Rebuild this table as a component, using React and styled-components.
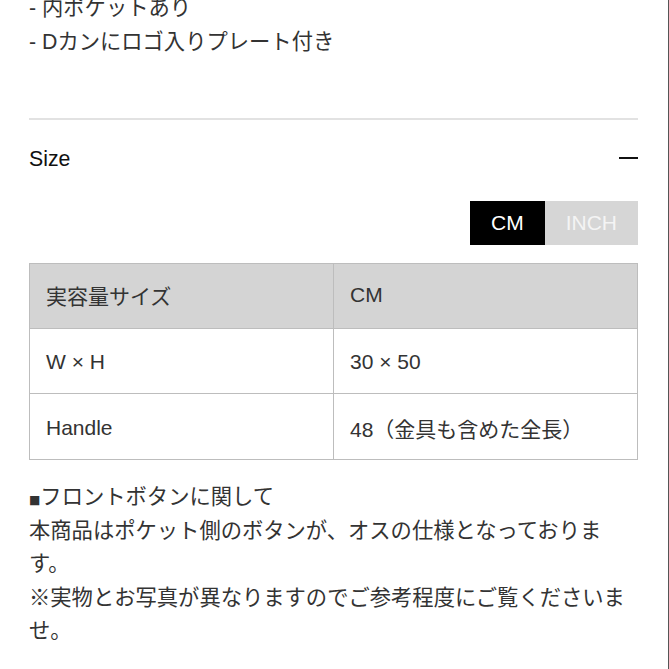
import React from "react";
import styled, { createGlobalStyle } from "styled-components";

const Global = createGlobalStyle`
  html, body { margin: 0; padding: 0; background: #fff; }
  body { font-family: "Liberation Sans", "Noto Sans CJK JP", sans-serif; }
`;

const Page = styled.div`
  width: 669px;
  height: 669px;
  box-sizing: border-box;
  border-right: 1px solid #555;
  overflow: hidden;
  padding: 0 30px 0 29px;
  color: #333;
  font-size: 21.3px;
`;

const Lines = styled.div`
  margin-top: ${(p) => p.$top}px;
  line-height: ${(p) => p.$lh}px;
`;

const Line = styled.div`
  white-space: nowrap;
`;

const Divider = styled.hr`
  margin: 59px 0 0;
  border: 0;
  height: 2px;
  background: #e2e2e2;
`;

const SectionHead = styled.div`
  margin-top: 19px;
  height: 40px;
  display: flex;
  align-items: center;
  justify-content: space-between;
  color: #111;
`;

const Minus = styled.span`
  display: block;
  width: 19px;
  height: 2px;
  background: #111;
  margin-top: -2px;
`;

const ToggleBar = styled.div`
  margin-top: 22px;
  display: flex;
  justify-content: flex-end;
`;

const ToggleButton = styled.div`
  height: 44px;
  padding: 0 21px;
  display: flex;
  align-items: center;
  font-size: 21px;
  background: ${(p) => (p.$active ? "#000" : "#d6d6d6")};
  color: ${(p) => (p.$active ? "#fff" : "#f4f4f4")};
`;

const Table = styled.table`
  margin-top: 18px;
  width: 100%;
  border-collapse: collapse;
  table-layout: fixed;
  border-right: 1px solid #ddd;
`;

const Cell = styled.td`
  height: ${(p) => p.$h}px;
  box-sizing: border-box;
  padding: ${(p) => (p.$head ? "0 16px 2px" : "2px 16px 0")};
  border: 1px solid #bdbdbd;
  background: ${(p) => (p.$head ? "#d4d4d4" : "#fff")};
  color: #333;
  font-size: 21px;
  vertical-align: middle;
  text-align: left;
  font-weight: normal;
`;

const Notes = styled.div`
  margin-top: 21px;
  line-height: 33.6px;
`;

const Square = styled.span`
  font-size: 12px;
  line-height: 1;
  font-family: "DejaVu Sans", sans-serif;
  color: #333;
`;

export default function App() {
  return (
    <>
      <Global />
      <Page>
        <Lines $top={-9} $lh={34}>
          <Line>- 内ポケットあり</Line>
          <Line>- Dカンにロゴ入りプレート付き</Line>
        </Lines>
        <Divider />
        <SectionHead>
          <span>Size</span>
          <Minus />
        </SectionHead>
        <ToggleBar>
          <ToggleButton $active>CM</ToggleButton>
          <ToggleButton>INCH</ToggleButton>
        </ToggleBar>
        <Table>
          <tbody>
            <tr>
              <Cell $head $h={65}>実容量サイズ</Cell>
              <Cell $head $h={65}>CM</Cell>
            </tr>
            <tr>
              <Cell $h={65}>W × H</Cell>
              <Cell $h={65}>30 × 50</Cell>
            </tr>
            <tr>
              <Cell $h={66}>Handle</Cell>
              <Cell $h={66}>48（金具も含めた全長）</Cell>
            </tr>
          </tbody>
        </Table>
        <Notes>
          <div>
            <Square>■</Square>フロントボタンに関して
          </div>
          <div>本商品はポケット側のボタンが、オスの仕様となっております。</div>
          <div>※実物とお写真が異なりますのでご参考程度にご覧くださいませ。</div>
        </Notes>
      </Page>
    </>
  );
}
